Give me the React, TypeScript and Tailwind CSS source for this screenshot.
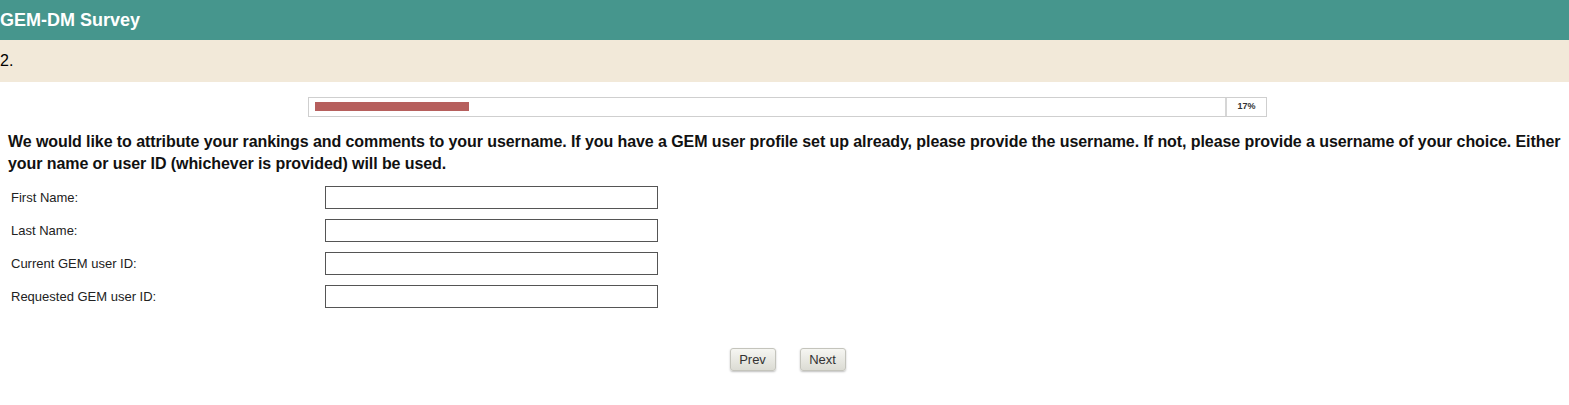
import { useState } from 'react';

const fields = ['First Name:', 'Last Name:', 'Current GEM user ID:', 'Requested GEM user ID:'];

export default function App() {
  const [values, setValues] = useState<string[]>(['', '', '', '']);

  return (
    <div className="min-h-screen bg-white text-black font-['Liberation_Sans',Arial,sans-serif]">
      <header className="h-[40px] bg-[#46968d] flex items-center">
        <h1 className="text-[18px] font-bold text-white leading-none">GEM-DM Survey</h1>
      </header>

      <div className="h-[42px] bg-[#f2e9d9] flex items-center">
        <span className="text-[16px] leading-none">2.</span>
      </div>

      {/* progress */}
      <div className="mt-[15px] ml-[308px] w-[959px] h-[20px] border border-[#cfcfcf] flex">
        <div className="w-[918px] border-r-2 border-[#d6d6d6] pl-[6px] pt-[4px]">
          <div className="h-[9px] w-[154px] bg-[#b65f5d]" />
        </div>
        <div className="flex-1 flex items-center justify-center text-[9px] font-bold text-[#333]">17%</div>
      </div>

      <p className="mt-[14px] px-2 text-[16px] font-bold leading-[22px] tracking-[-0.08px] text-[#111]">
        We would like to attribute your rankings and comments to your username. If you have a GEM user profile set up already, please provide the username. If not, please provide a username of your choice. Either your name or user ID (whichever is provided) will be used.
      </p>

      <div className="mt-[6px] flex flex-col">
        {fields.map((label, i) => (
          <div key={label} className="h-[33px] flex items-center">
            <label className="w-[325px] pl-[11px] text-[13px] text-[#222]">{label}</label>
            <input
              value={values[i]}
              onChange={(e) => setValues(values.map((v, j) => (j === i ? e.target.value : v)))}
              className="w-[333px] h-[23px] border border-[#555] bg-white px-1 text-[12px] outline-none"
            />
          </div>
        ))}
      </div>

      <div className="mt-[35px] flex justify-center gap-[24px] pl-[6px]">
        <button className="w-[46px] h-[23px] rounded-[3px] border border-[#c4c4bc] bg-gradient-to-b from-[#f6f6f2] to-[#dcdcd4] text-[13px] text-[#333] shadow-[0_1px_2px_rgba(0,0,0,0.25)]">
          Prev
        </button>
        <button className="w-[46px] h-[23px] rounded-[3px] border border-[#c4c4bc] bg-gradient-to-b from-[#f6f6f2] to-[#dcdcd4] text-[13px] text-[#333] shadow-[0_1px_2px_rgba(0,0,0,0.25)]">
          Next
        </button>
      </div>
    </div>
  );
}
